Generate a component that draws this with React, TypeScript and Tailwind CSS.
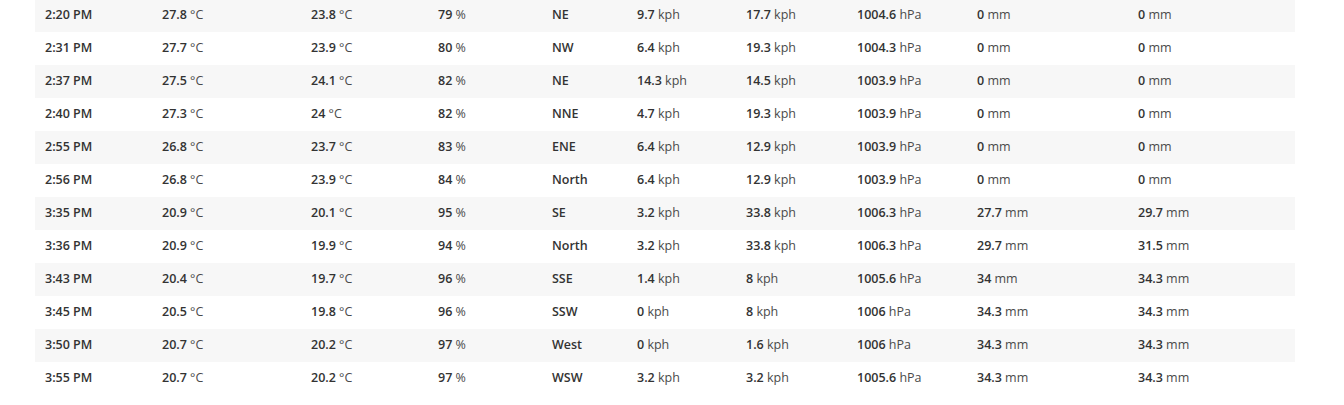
const rows: string[][] = [
  ['2:20 PM', '27.8', '23.8', '79', 'NE', '9.7', '17.7', '1004.6', '0', '0'],
  ['2:31 PM', '27.7', '23.9', '80', 'NW', '6.4', '19.3', '1004.3', '0', '0'],
  ['2:37 PM', '27.5', '24.1', '82', 'NE', '14.3', '14.5', '1003.9', '0', '0'],
  ['2:40 PM', '27.3', '24', '82', 'NNE', '4.7', '19.3', '1003.9', '0', '0'],
  ['2:55 PM', '26.8', '23.7', '83', 'ENE', '6.4', '12.9', '1003.9', '0', '0'],
  ['2:56 PM', '26.8', '23.9', '84', 'North', '6.4', '12.9', '1003.9', '0', '0'],
  ['3:35 PM', '20.9', '20.1', '95', 'SE', '3.2', '33.8', '1006.3', '27.7', '29.7'],
  ['3:36 PM', '20.9', '19.9', '94', 'North', '3.2', '33.8', '1006.3', '29.7', '31.5'],
  ['3:43 PM', '20.4', '19.7', '96', 'SSE', '1.4', '8', '1005.6', '34', '34.3'],
  ['3:45 PM', '20.5', '19.8', '96', 'SSW', '0', '8', '1006', '34.3', '34.3'],
  ['3:50 PM', '20.7', '20.2', '97', 'West', '0', '1.6', '1006', '34.3', '34.3'],
  ['3:55 PM', '20.7', '20.2', '97', 'WSW', '3.2', '3.2', '1005.6', '34.3', '34.3'],
];

const units = ['', '°C', '°C', '%', '', 'kph', 'kph', 'hPa', 'mm', 'mm'];
const widths = ['w-[117px]', 'w-[149px]', 'w-[127px]', 'w-[114px]', 'w-[85px]', 'w-[109px]', 'w-[111px]', 'w-[120px]', 'w-[161px]', 'w-[167px]'];

export default function App() {
  return (
    <div className="bg-white h-[405px] overflow-hidden px-[35px] pr-[49px]" style={{ fontFamily: '"Open Sans", "Liberation Sans", sans-serif' }}>
      <table className="w-[1260px] table-fixed border-collapse -mt-[1px] text-[12.5px] text-[#333]">
        <colgroup>
          {widths.map((w, i) => (
            <col key={i} className={w} />
          ))}
        </colgroup>
        <tbody>
          {rows.map((r, i) => (
            <tr key={i} className={i % 2 === 0 ? 'bg-[#f7f7f7] h-[33px]' : 'bg-white h-[33px]'}>
              {r.map((v, j) => (
                <td key={j} className="px-[10px] align-middle whitespace-nowrap">
                  <span className="font-semibold">{v}</span>
                  {units[j] && (
                    <span className="text-[#4a4a4a]">{' ' + units[j]}</span>
                  )}
                </td>
              ))}
            </tr>
          ))}
        </tbody>
      </table>
    </div>
  );
}
